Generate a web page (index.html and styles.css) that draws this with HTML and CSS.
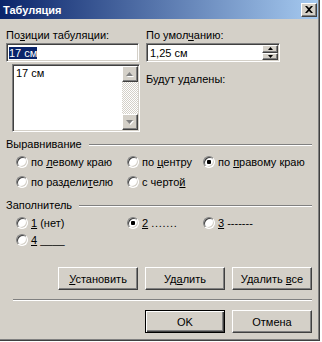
FILE: index.html
```html
<!DOCTYPE html>
<html lang="ru">
<head>
    <meta charset="UTF-8">
    <title>Табуляция</title>
    <link rel="stylesheet" href="styles.css">
</head>
<body>
    <div class="window">
        <div class="titlebar">
            <span class="title">Табуляция</span>
            <span class="caption-btn">
                <svg width="8" height="7" viewBox="0 0 8 7"><path d="M0 0h2l2 2 2-2h2L5 3.5 8 7H6L4 5 2 7H0l3-3.5z" fill="#000"/></svg>
            </span>
        </div>
        <div class="client">
            <div class="top">
                <div class="col col-left">
                    <div class="label">По<u>з</u>иции табуляции:</div>
                    <div class="edit"><span class="sel">17 см</span></div>
                    <div class="listbox">
                        <div class="list-items"><div>17 см</div></div>
                        <div class="vscroll">
                            <div class="sb-btn raised">
                                <svg width="8" height="5" viewBox="0 0 8 5"><path d="M4.5 1 8 5H1z" fill="#fff"/><path d="M3.5 0 7 4H0z" fill="#808080"/></svg>
                            </div>
                            <div class="sb-track"></div>
                            <div class="sb-btn raised">
                                <svg width="8" height="5" viewBox="0 0 8 5"><path d="M1 1h7L4.5 5z" fill="#fff"/><path d="M0 0h7L3.5 4z" fill="#808080"/></svg>
                            </div>
                        </div>
                    </div>
                </div>
                <div class="col col-right">
                    <div class="label">По умол<u>ч</u>анию:</div>
                    <div class="edit spin">
                        <span class="value">1,25 см</span>
                        <div class="spin-btns">
                            <div class="spin-btn raised"><svg width="5" height="3" viewBox="0 0 5 3"><path d="M2.5 0 5 3H0z"/></svg></div>
                            <div class="spin-btn raised"><svg width="5" height="3" viewBox="0 0 5 3"><path d="M0 0h5L2.5 3z"/></svg></div>
                        </div>
                    </div>
                    <div class="note">Будут удалены:</div>
                </div>
            </div>

            <div class="group-head first"><span>Выравнивание</span><span class="etch"></span></div>
            <div class="radios align">
                <div class="radio-item"><span class="radio"></span><span>по <u>л</u>евому краю</span></div>
                <div class="radio-item"><span class="radio"></span><span>по <u>ц</u>ентру</span></div>
                <div class="radio-item"><span class="radio on"><span class="dot"></span></span><span>по <u>п</u>равому краю</span></div>
                <div class="radio-item"><span class="radio"></span><span>по раздели<u>т</u>елю</span></div>
                <div class="radio-item"><span class="radio"></span><span>с черто<u>й</u></span></div>
            </div>

            <div class="group-head second"><span>Заполнитель</span><span class="etch"></span></div>
            <div class="radios fill">
                <div class="radio-item"><span class="radio"></span><span><u>1</u> (нет)</span></div>
                <div class="radio-item"><span class="radio on"><span class="dot"></span></span><span><u>2</u> <span class="dots">.......</span></span></div>
                <div class="radio-item"><span class="radio"></span><span><u>3</u> -------</span></div>
                <div class="radio-item"><span class="radio"></span><span><u>4</u> ____</span></div>
            </div>

            <div class="btn-row">
                <div class="btn raised"><span><u>У</u>становить</span></div>
                <div class="btn raised"><span>Уд<u>а</u>лить</span></div>
                <div class="btn raised"><span>Удалить <u>в</u>се</span></div>
            </div>
            <div class="sep"></div>
            <div class="btn-row">
                <div class="btn default"><span>OK</span></div>
                <div class="btn raised"><span>Отмена</span></div>
            </div>
        </div>
    </div>
</body>
</html>
```

FILE: styles.css
```css
* {
    box-sizing: border-box;
}
body {
    margin: 0;
    background: #fff;
    font-family: "Liberation Sans", Arial, sans-serif;
    font-size: 11px;
    color: #000;
}
u {
    text-underline-offset: 1px;
}
.window {
    width: 320px;
    height: 341px;
    background: #d4d0c8;
    border-right: 1px solid #404040;
    border-bottom: 1px solid #404040;
    box-shadow: inset -1px -1px #808080;
}
.raised {
    background: #d4d0c8;
    border: 1px solid;
    border-color: #fff #404040 #404040 #fff;
    box-shadow: inset -1px -1px #808080, inset 1px 1px #d4d0c8;
}
.titlebar {
    height: 19px;
    margin-right: 1px;
    display: flex;
    align-items: center;
    padding: 0 1px 0 3px;
    background: linear-gradient(to right, #0a246a, #a6caf0);
}
.title {
    color: #fff;
    font-weight: bold;
}
.caption-btn {
    margin-left: auto;
    width: 16px;
    height: 14px;
    display: flex;
    align-items: center;
    justify-content: center;
    background: #d4d0c8;
    border: 1px solid;
    border-color: #fff #404040 #404040 #fff;
    box-shadow: inset -1px -1px #808080;
}
.client {
    padding: 0 7px 0 6px;
}
.top {
    display: flex;
    gap: 6px;
    padding-top: 10px;
}
.col {
    width: 134px;
}
.label {
    line-height: 13px;
    height: 13px;
    margin-bottom: 1px;
    white-space: nowrap;
}
.edit {
    height: 19px;
    background: #fff;
    border: 1px solid;
    border-color: #808080 #fff #fff #808080;
    box-shadow: inset 1px 1px #404040, inset -1px -1px #d4d0c8;
    padding: 1px 1px 1px 2px;
    display: flex;
    align-items: center;
    white-space: nowrap;
}
.col-left .edit {
    width: 133px;
}
.sel {
    background: #0a246a;
    color: #fff;
}
.listbox {
    margin: 2px 0 0 6px;
    width: 128px;
    height: 68px;
    background: #fff;
    border: 1px solid;
    border-color: #808080 #fff #fff #808080;
    box-shadow: inset 1px 1px #404040, inset -1px -1px #d4d0c8;
    padding: 1px;
    display: flex;
}
.list-items {
    flex: 1;
    padding: 1px 2px;
    line-height: 13px;
}
.vscroll {
    width: 16px;
    display: flex;
    flex-direction: column;
}
.sb-btn {
    height: 16px;
    display: flex;
    align-items: center;
    justify-content: center;
}
.sb-track {
    flex: 1;
    background: repeating-conic-gradient(#fff 0 25%, #d4d0c8 0 50%) 0 0 / 2px 2px;
}
.spin .value {
    padding-left: 1px;
}
.spin-btns {
    margin-left: auto;
    width: 16px;
    height: 15px;
    display: flex;
    flex-direction: column;
}
.spin-btn {
    flex: 1;
    display: flex;
    align-items: center;
    justify-content: center;
}
.note {
    margin-top: 11px;
    line-height: 13px;
}
.group-head {
    display: flex;
    align-items: center;
    line-height: 13px;
}
.group-head.first {
    margin-top: 6px;
}
.group-head.second {
    margin-top: 7px;
}
.etch {
    flex: 1;
    margin-left: 7px;
    border-top: 1px solid #808080;
    border-bottom: 1px solid #fff;
}
.radios {
    display: grid;
    grid-template-columns: 111px 76px auto;
    padding-left: 10px;
}
.radios.align {
    padding-top: 1px;
    grid-auto-rows: 20px;
}
.radios.fill {
    padding-top: 2px;
    grid-auto-rows: 17px;
}
.radio-item {
    display: flex;
    align-items: center;
    white-space: nowrap;
}
.radio {
    width: 12px;
    height: 12px;
    margin-right: 3px;
    border-radius: 50%;
    background: #fff;
    border: 1px solid;
    border-color: #808080 #fff #fff #808080;
    box-shadow: inset 1px 1px #404040, inset -1px -1px #d4d0c8;
    display: flex;
    align-items: center;
    justify-content: center;
    flex: none;
}
.dot {
    width: 4px;
    height: 4px;
    border-radius: 1px;
    background: #000;
}
.dots {
    letter-spacing: 0.7px;
}
.btn-row {
    display: flex;
    justify-content: flex-end;
    gap: 7px;
}
.fill + .btn-row {
    margin-top: 19px;
}
.btn {
    width: 80px;
    height: 23px;
    display: flex;
    align-items: center;
    justify-content: center;
}
.btn.default {
    background: #d4d0c8;
    border: 1px solid #000;
    box-shadow: inset 1px 1px #fff, inset -1px -1px #404040, inset -2px -2px #808080;
}
.sep {
    margin: 9px 0 9px 7px;
    border-top: 1px solid #808080;
    border-bottom: 1px solid #fff;
}
```
